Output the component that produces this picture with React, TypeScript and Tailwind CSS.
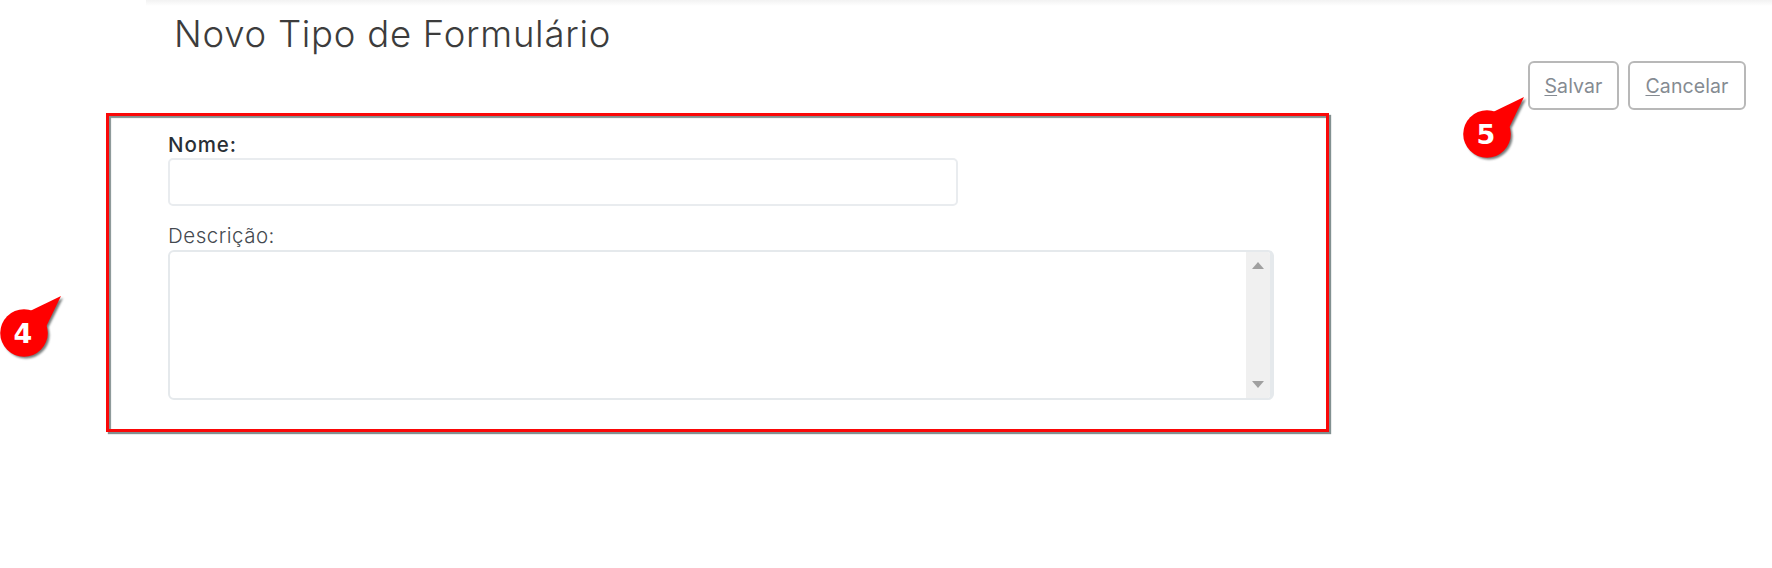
import React from "react";

function Marker({ n, className }: { n: number; className: string }) {
  return (
    <svg viewBox="0 0 66 68" className={`absolute h-[68px] w-[66px] ${className}`} aria-label={String(n)}>
      <g fill="#666b6b" opacity="0.9" transform="translate(2 2)" className="blur-[1px]">
        <circle cx="24" cy="38" r="23.5" />
        <path d="M31 16L61 1L45 33Z" />
      </g>
      <g fill="#ff0000">
        <circle cx="24" cy="38" r="23.8" />
        <path d="M30 16L61 1L46 32Z" />
      </g>
      <text x="23" y="48" textAnchor="middle" fill="#fff" className="font-['DejaVu_Sans',sans-serif] text-[27px] font-bold">{n}</text>
    </svg>
  );
}

export default function App() {
  return (
    <main className="relative h-[568px] w-[1772px] overflow-hidden bg-white font-['Inter',sans-serif]">
      <div className="ml-[146px] h-[6px] bg-linear-to-b from-[#f2f2f2] to-white" />
      <h1 className="ml-[174px] h-[55px] text-[36.5px] leading-[56px] font-light tracking-[0.75px] whitespace-nowrap text-[#3c3c3c]">
        Novo Tipo de Formulário
      </h1>
      <div className="mr-[26px] flex h-[49px] justify-end gap-[9px] text-[19.5px] tracking-[0.1px] text-[#858b92]">
        <button className="h-[49px] w-[91px] rounded-[6px] border-2 border-[#b8b8b8] pt-[2px]">
          <span className="underline decoration-1 underline-offset-2">S</span>alvar
        </button>
        <button className="h-[49px] w-[118px] rounded-[6px] border-2 border-[#b8b8b8] pt-[2px]">
          <span className="underline decoration-1 underline-offset-2">C</span>ancelar
        </button>
      </div>
      <section className="mt-[3px] ml-[106px] h-[319px] w-[1223px] border-[3px] border-[#fa0808] pt-[16px] pl-[59px] shadow-[2px_2px_1px_#829090,inset_2px_2px_1px_#829090]">
        <label className="block h-[26px] text-[20.5px] leading-[25px] font-medium tracking-[0.9px] text-[#292f36]">Nome:</label>
        <input className="block h-[48px] w-[790px] rounded-[5px] border-2 border-[#e9ecef] outline-none" />
        <label className="mt-[17px] block h-[27px] text-[20.5px] leading-[25px] font-light tracking-[0.5px] text-[#44494f]">Descrição:</label>
        <div className="flex h-[150px] w-[1106px] overflow-hidden rounded-[6px] border-2 border-r-4 border-[#e5e9ec]">
          <textarea className="min-w-0 flex-1 resize-none overflow-hidden outline-none" />
          <div className="flex w-[24px] flex-col items-center justify-between bg-[#f0f0f0] pt-[10px] pb-[9px]">
            <svg viewBox="0 0 12 8" className="h-[8px] w-[12px]" fill="#a0a0a0"><path d="M6 0L12 7H0Z" /></svg>
            <svg viewBox="0 0 12 8" className="h-[8px] w-[12px]" fill="#a0a0a0"><path d="M0 0H12L6 7Z" /></svg>
          </div>
        </div>
      </section>
      <Marker n={4} className="top-[295px] left-0" />
      <Marker n={5} className="top-[96px] left-[1463px]" />
    </main>
  );
}
